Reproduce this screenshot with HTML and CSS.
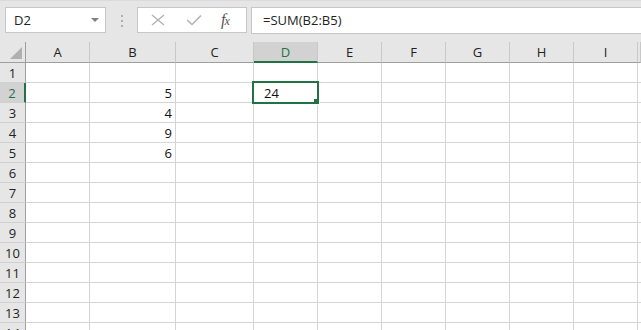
FILE: index.html
```html
<!DOCTYPE html>
<html lang="en">
<head>
    <meta charset="UTF-8">
    <title>Sheet1</title>
    <link rel="stylesheet" href="styles.css">
</head>
<body>

    <div class="toolbar">
        <div class="namebox">
            <span>D2</span>
            <span class="arrow"></span>
        </div>
        <div class="dots"><i></i><i></i><i></i></div>
        <div class="fxbox">
            <svg width="14" height="12" viewBox="0 0 14 12"><path d="M1 1 L13 11 M13 1 L1 11" stroke="#b3b3b3" stroke-width="1.4" fill="none"/></svg>
            <svg width="16" height="12" viewBox="0 0 16 12"><path d="M1 6 L6 10.5 L15 1.5" stroke="#b3b3b3" stroke-width="1.6" fill="none"/></svg>
            <span class="fx">f<small>x</small></span>
        </div>
        <div class="formula">=SUM(B2:B5)</div>
    </div>

    <div class="grid" id="grid"></div>

    <script>
        var cols = ["A", "B", "C", "D", "E", "F", "G", "H", "I", ""];
        var data = { "B2": "5", "B3": "4", "B4": "9", "B5": "6" };
        var grid = document.getElementById("grid");
        var html = '<div class="row head"><div class="cell corner"><span class="tri"></span></div>';
        cols.forEach(c => {
            html += '<div class="cell col' + (c == "D" ? " sel" : "") + '">' + c + '</div>';
        });
        html += '</div>';
        for (let r = 1; r <= 14; r++) {
            html += '<div class="row"><div class="cell rowhead' + (r == 2 ? " sel" : "") + '">' + r + '</div>';
            cols.forEach(c => {
                let key = c + r;
                let cls = "cell";
                let txt = data[key] || "";
                if (key == "D2") {
                    cls += " active";
                    txt = '<span class="val">24</span><span class="frame"></span><span class="handle"></span>';
                }
                html += '<div class="' + cls + '">' + txt + '</div>';
            });
            html += '</div>';
        }
        grid.innerHTML = html;
    </script>

</body>
</html>
```

FILE: styles.css
```css
body { margin: 0; width: 641px; height: 330px; overflow: hidden; background: #fff; font-family: "Liberation Sans", Arial, sans-serif; }

.toolbar { height: 42px; background: #e6e6e6; border-top: 1px solid #dadada; box-sizing: border-box; display: flex; align-items: flex-start; padding-top: 6px; }
.namebox { margin-left: 5px; width: 101px; height: 26px; box-sizing: border-box; border: 1px solid #c6c6c6; background: #fff; display: flex; align-items: center; justify-content: space-between; padding: 0 6px 0 8px; font-family: "Open Sans", sans-serif; font-size: 13px; color: #222; }
.arrow { width: 0; height: 0; border-left: 4px solid transparent; border-right: 4px solid transparent; border-top: 4px solid #808080; }
.dots { width: 31px; display: flex; flex-direction: column; align-items: center; gap: 3px; padding-top: 8px; }
.dots i { width: 2px; height: 2px; background: #b0b0b0; }
.fxbox { width: 110px; height: 26px; box-sizing: border-box; border: 1px solid #c6c6c6; background: #fff; display: flex; align-items: center; padding-left: 13px; gap: 21px; }
.fx { font-family: "Liberation Serif", serif; font-style: italic; font-size: 16px; color: #555; margin-left: -2px; letter-spacing: -1px; }
.fx small { font-size: 12px; }
.formula { margin-left: 4px; flex: 1; height: 27px; box-sizing: border-box; border: 1px solid #c6c6c6; border-right: none; background: #fff; padding: 3px 0 0 11px; font-family: "Open Sans", sans-serif; font-size: 13px; color: #222; }

.row { display: flex; height: 20px; }
.cell { box-sizing: border-box; flex: none; border-right: 1px solid #d4d4d4; border-bottom: 1px solid #d4d4d4; height: 20px; width: 64px; font-family: "Open Sans", sans-serif; font-size: 13px; color: #111; text-align: right; padding-right: 3px; line-height: 20px; }
.row .cell:nth-child(3) { width: 86px; }
.row .cell:nth-child(4) { width: 78px; }
.row .cell:last-child { flex: 1; }

.head { height: 21px; }
.head .cell { height: 21px; background: #e6e6e6; border-right-color: #c8c8c8; border-bottom-color: #9f9f9f; text-align: center; padding: 0; font-size: 13px; color: #222; line-height: 21px; }
.head .corner { width: 26px; position: relative; border-right-color: #9f9f9f; }
.tri { position: absolute; right: 3px; bottom: 3px; width: 0; height: 0; border-left: 12px solid transparent; border-bottom: 12px solid #b0b0b0; }
.head .col.sel { background: #d2d2d2; color: #217346; border-bottom: 2px solid #217346; line-height: 20px; }

.rowhead { width: 26px; background: #e6e6e6; border-right-color: #9f9f9f; border-bottom-color: #d0d0d0; text-align: center; padding: 0; color: #222; }
.rowhead.sel { background: #d2d2d2; color: #217346; border-right: 2px solid #217346; }

.active { position: relative; text-align: left; padding: 0 0 0 10px; }
.frame { position: absolute; left: -2px; top: -2px; width: 67px; height: 23px; box-sizing: border-box; border: 2px solid #217346; }
.handle { position: absolute; left: 60px; top: 16px; width: 6px; height: 6px; box-sizing: border-box; background: #217346; border: 1px solid #fff; border-top: none; border-left: none; }
```
